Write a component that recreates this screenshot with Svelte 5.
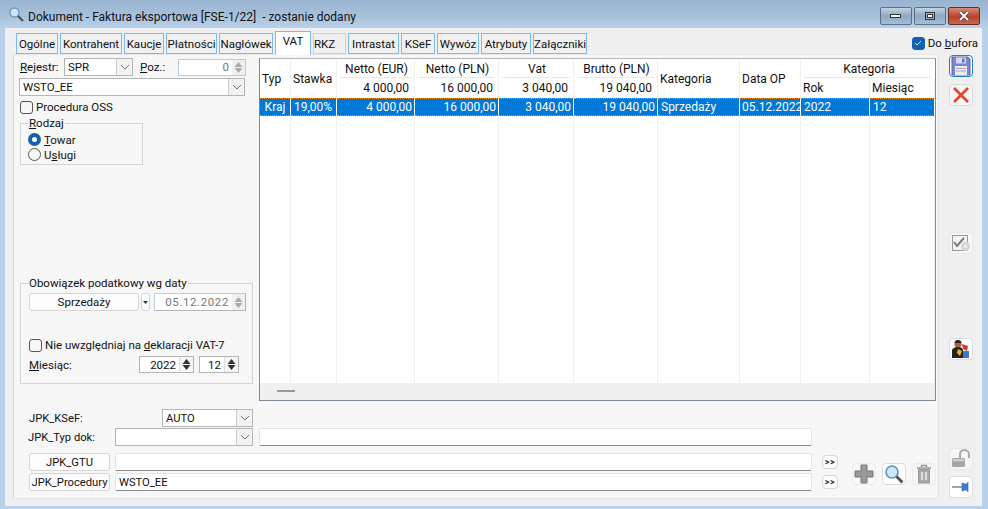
<script>
  const tabs = ["Ogólne", "Kontrahent", "Kaucje", "Płatności", "Nagłówek", "VAT", "RKZ", "Intrastat", "KSeF", "Wywóz", "Atrybuty", "Załączniki"];
  const tabWidths = [42, 62, 40, 51, 54, 36, 33, 51, 34, 42, 50, 54];
  const row = ["Kraj", "19,00%", "4 000,00", "16 000,00", "3 040,00", "19 040,00", "Sprzedaży", "05.12.2022", "2022", "12"];
  const rowRight = [false, false, true, true, true, true, false, false, false, false];
</script>

{#snippet arrow()}
  <span class="arrow">
    <svg width="10" height="6" viewBox="0 0 10 6"><path d="M1 1l4 4 4-4" fill="none" stroke="#777" /></svg>
  </span>
{/snippet}

{#snippet spin(dark)}
  <span class="spin" class:dark>
    <svg width="9" height="5" viewBox="0 0 9 5"><path d="M4.5 0l4 5h-8z" fill={dark ? "#333" : "#aaa"} /></svg>
    <svg width="9" height="5" viewBox="0 0 9 5"><path d="M4.5 5l4-5h-8z" fill={dark ? "#333" : "#aaa"} /></svg>
  </span>
{/snippet}

<div class="window">
  <header class="titlebar">
    <svg class="appicon" width="17" height="17" viewBox="0 0 17 17">
      <circle cx="6.5" cy="6.5" r="4.5" fill="#cfe6f7" stroke="#6a9cc4" stroke-width="1.4" />
      <path d="M10 10l5 5" stroke="#555" stroke-width="2.4" />
    </svg>
    <span class="title">Dokument - Faktura eksportowa [FSE-1/22]&nbsp; - zostanie dodany</span>
    <div class="wincontrols">
      <span class="wbtn">
        <svg width="12" height="6" viewBox="0 0 12 6"><rect x=".5" y="1.5" width="10" height="3" fill="#fff" stroke="#333" /></svg>
      </span>
      <span class="wbtn">
        <svg width="12" height="10" viewBox="0 0 12 10"><rect x="1.5" y="1.5" width="9" height="7" fill="none" stroke="#333" stroke-width="1" /><rect x="3.5" y="3.5" width="5" height="3" fill="#fff" stroke="#333" /></svg>
      </span>
      <span class="wbtn close">
        <svg width="14" height="10" viewBox="0 0 14 10"><path d="M3 1l8 8M11 1l-8 8" stroke="#333" stroke-width="3.4" /><path d="M3 1l8 8M11 1l-8 8" stroke="#fff" stroke-width="2" /></svg>
      </span>
    </div>
  </header>

  <div class="client">
    <nav class="tabbar">
      {#each tabs as tab, i}
        <span class="tab" class:active={tab === "VAT"} class:plain={tab === "RKZ"} style="width: {tabWidths[i]}px">{tab}</span>
      {/each}
      <label class="buffer">
        <span class="checkbox checked">
          <svg width="10" height="10" viewBox="0 0 10 10"><path d="M2 5l2 2 4-4" fill="none" stroke="#cfe2f7" /></svg>
        </span>
        <span>Do <u>b</u>ufora</span>
      </label>
    </nav>

    <div class="workspace">
      <main class="panel">
        <div class="upper">
          <section class="left">
            <div class="line first">
              <span class="lbl rejestr"><u>R</u>ejestr:</span>
              <span class="field select spr">SPR{@render arrow()}</span>
              <span class="lbl poz"><u>P</u>oz.:</span>
              <span class="field number poz-field">0{@render spin(false)}</span>
            </div>
            <span class="field select wsto">WSTO_EE{@render arrow()}</span>
            <label class="check oss"><span class="checkbox"></span>Procedura OSS</label>

            <fieldset class="group rodzaj">
              <legend><u>R</u>odzaj</legend>
              <label class="radio-line"><span class="radio on"></span><span><u>T</u>owar</span></label>
              <label class="radio-line"><span class="radio"></span><span>U<u>s</u>ługi</span></label>
            </fieldset>

            <fieldset class="group tax">
              <legend>Obowiązek podatkowy wg daty</legend>
              <div class="line">
                <span class="btn sale">Sprzedaży</span>
                <span class="btn mini">
                  <svg width="5" height="3" viewBox="0 0 5 3"><path d="M0 0h5L2.5 3z" fill="#333" /></svg>
                </span>
                <span class="field number date">05.12.2022{@render spin(false)}</span>
              </div>
              <label class="check vat7"><span class="checkbox"></span><span>Nie uwzględniaj na <u>d</u>eklaracji VAT-7</span></label>
              <div class="line month">
                <span class="lbl month-lbl"><u>M</u>iesiąc:</span>
                <span class="field number year">2022{@render spin(true)}</span>
                <span class="field number mon">12{@render spin(true)}</span>
              </div>
            </fieldset>
          </section>

          <section class="grid">
            <div class="hcell typ">Typ</div>
            <div class="hcell stawka">Stawka</div>
            <div class="hcell top" style="grid-column: 3">Netto (EUR)</div>
            <div class="hcell top" style="grid-column: 4">Netto (PLN)</div>
            <div class="hcell top" style="grid-column: 5">Vat</div>
            <div class="hcell top" style="grid-column: 6">Brutto (PLN)</div>
            <div class="hcell kat">Kategoria</div>
            <div class="hcell data">Data OP</div>
            <div class="hcell top wide">Kategoria</div>
            <div class="hcell sum" style="grid-column: 3">4 000,00</div>
            <div class="hcell sum" style="grid-column: 4">16 000,00</div>
            <div class="hcell sum" style="grid-column: 5">3 040,00</div>
            <div class="hcell sum" style="grid-column: 6">19 040,00</div>
            <div class="hcell sub" style="grid-column: 9">Rok</div>
            <div class="hcell sub" style="grid-column: 10">Miesiąc</div>

            {#each row as value, i}
              <div class="cell" class:right={rowRight[i]} class:center={i === 0} class:dated={i === 7}>{value}</div>
            {/each}
            {#each row as _}
              <div class="blank"></div>
            {/each}

            <div class="gridfoot"><span class="dash"></span></div>
          </section>
        </div>

        <div class="jpk">
          <div class="jpk-row ksef">
            <span class="jpk-lbl">JPK_KSeF:</span>
            <span class="field select auto">AUTO{@render arrow()}</span>
          </div>
          <div class="jpk-row typdok">
            <span class="jpk-lbl narrow">JPK_Typ dok:</span>
            <span class="field select typ-sel">{@render arrow()}</span>
            <span class="field flat long"></span>
          </div>
          <div class="jpk-row gtu">
            <span class="btn jpk-btn">JPK_GTU</span>
            <span class="field flat wide-input"></span>
            <span class="btn more">&gt;&gt;</span>
          </div>
          <div class="jpk-row proc">
            <span class="btn jpk-btn">JPK_Procedury</span>
            <span class="field flat wide-input">WSTO_EE</span>
            <span class="btn more">&gt;&gt;</span>
            <div class="tools">
              <span class="tool">
                <svg width="20" height="20" viewBox="0 0 20 20"><path d="M7 1h6v6h6v6h-6v6H7v-6H1V7h6z" fill="#9a9a9a" stroke="#777" /></svg>
              </span>
              <span class="tool strong">
                <svg width="20" height="20" viewBox="0 0 20 20">
                  <circle cx="8" cy="8" r="6" fill="#cfe6f7" stroke="#5a93c4" stroke-width="1.6" />
                  <path d="M12.5 12.5l6 6" stroke="#555" stroke-width="3" />
                </svg>
              </span>
              <span class="tool">
                <svg width="16" height="20" viewBox="0 0 16 20"><path d="M1 4h14M5.500 3V1.500h5V3" fill="none" stroke="#999" stroke-width="1.500" /><path d="M2.500 5.500h11V19h-11z" fill="#aaa" stroke="#999" /><path d="M6 8v8M10 8v8" stroke="#ddd" stroke-width="2" /></svg>
              </span>
            </div>
          </div>
        </div>
      </main>

      <aside class="sidebar">
        <span class="side focus">
          <svg width="20" height="20" viewBox="0 0 20 20">
            <path d="M1 1h16l2 2v16H1z" fill="#7d87c9" stroke="#5b66a8" />
            <rect x="5" y="1.500" width="10" height="6" fill="#d5d8ec" />
            <rect x="11" y="2.500" width="2.500" height="4" fill="#6570b5" />
            <rect x="4" y="10" width="12" height="9" fill="#e8e9f3" />
            <path d="M5 12.500h10M5 15h10" stroke="#aab" />
          </svg>
        </span>
        <span class="side">
          <svg width="18" height="18" viewBox="0 0 18 18"><path d="M2 2l14 14M16 2L2 16" stroke="#e8412a" stroke-width="2.600" /></svg>
        </span>
        <span class="side plain gear">
          <svg width="20" height="18" viewBox="0 0 20 18">
            <rect x="1.500" y="1.500" width="15" height="15" fill="#f4f4f4" stroke="#999" />
            <path d="M3 8l3 4 7-8" fill="none" stroke="#7a7a7a" stroke-width="2" />
            <circle cx="14.500" cy="12.500" r="4.500" fill="#d4d4d4" />
            <circle cx="14.500" cy="12.500" r="1.500" fill="#f4f4f4" />
          </svg>
        </span>
        <span class="side person">
          <svg width="20" height="20" viewBox="0 0 20 20">
            <circle cx="7" cy="5" r="3.500" fill="#a8663a" />
            <path d="M3.500 4c0-4 7-4 7 0z" fill="#2a2220" />
            <path d="M1 19v-7c0-3 3-4 6-4s5 1 5 4v7z" fill="#222" />
            <path d="M7 10l4 2-2 5-3-3z" fill="#eeb120" />
            <path d="M11 5l6 2-1 5-4-2z" fill="#d93a2b" />
            <path d="M12 12h6v7h-6z" fill="#3a78d0" />
          </svg>
        </span>
        <span class="side lock">
          <svg width="21" height="20" viewBox="0 0 21 20">
            <path d="M9 9V5.500a4.500 4.500 0 0 1 9 0V9" fill="none" stroke="#aaa" stroke-width="2" />
            <rect x="1" y="9" width="13" height="9" rx="1.500" fill="#a5a5a5" />
            <rect x="2" y="10" width="11" height="2.500" fill="#ccc" />
          </svg>
        </span>
        <span class="side pin">
          <svg width="20" height="16" viewBox="0 0 20 16">
            <path d="M1 8h10" stroke="#8a8a8a" stroke-width="1.500" />
            <path d="M11 4l3 1h2l1-2v10l-1-2h-2l-3 1z" fill="#3d7fd0" stroke="#2a60a8" stroke-width=".6" />
          </svg>
        </span>
      </aside>
    </div>
  </div>
</div>

<style>
  :global(body) {
    margin: 0;
    background: #b9d1ea;
  }

  .window {
    width: 988px;
    height: 509px;
    display: flex;
    flex-direction: column;
    overflow: hidden;
    font-family: Roboto, "Noto Sans", sans-serif;
    font-size: 12px;
    color: #111;
    background: #b9d1ea;
  }

  u {
    text-underline-offset: 1px;
  }

  .titlebar {
    height: 28px;
    display: flex;
    align-items: center;
    padding-left: 8px;
    padding-right: 8px;
    flex-shrink: 0;
    background: linear-gradient(#99b4d1, #a9c2dc 60%, #b9d1ea);
  }

  .appicon {
    margin-right: 2px;
  }

  .title {
    font-size: 12px;
    flex: 1;
    padding-top: 5px;
    padding-left: 1px;
  }

  .wincontrols {
    display: flex;
    gap: 2px;
    align-self: flex-start;
    margin-top: 7px;
  }

  .wbtn {
    width: 32px;
    height: 18px;
    box-sizing: border-box;
    border: 1px solid #5c7087;
    border-radius: 2px;
    background: linear-gradient(#c3d3e3, #8fa8c2 50%, #a6bed6);
    display: flex;
    align-items: center;
    justify-content: center;
  }

  .wbtn.close {
    background: linear-gradient(#d68a78, #b9402c 55%, #c76a55);
    border-color: #6b2d22;
  }

  .client {
    flex: 1;
    margin: 0 6px 3px 5px;
    background: #f0f0f0;
    display: flex;
    flex-direction: column;
    min-height: 0;
  }

  .tabbar {
    height: 26px;
    display: flex;
    align-items: flex-start;
    padding: 4px 0 0 11px;
    gap: 2px;
    box-sizing: border-box;
    flex-shrink: 0;
    font-size: 11.5px;
  }

  .tab {
    height: 21px;
    margin-top: 1px;
    box-sizing: border-box;
    border: 1px solid #78bdf2;
    background: #f0f0f0;
    display: flex;
    align-items: center;
    justify-content: center;
    white-space: nowrap;
  }

  .tab.active {
    background: #fff;
    height: 24px;
    margin-top: -1px;
    padding-bottom: 6px;
    border-bottom: 0;
    position: relative;
    z-index: 1;
  }

  .tab.plain {
    border-color: #d0d0d0;
    justify-content: flex-start;
    padding-left: 0;
  }

  .buffer {
    margin-left: auto;
    display: flex;
    align-items: center;
    gap: 3px;
    margin-right: 4px;
    margin-top: 4px;
  }

  .workspace {
    flex: 1;
    display: flex;
    min-height: 0;
  }

  .panel {
    margin-left: 8px;
    margin-bottom: 7px;
    width: 926px;
    box-sizing: border-box;
    background: #f7f7f7;
    border: 1px solid #e6e6e6;
    border-left-color: #dcdcdc;
    display: flex;
    flex-direction: column;
  }

  .upper {
    display: flex;
    height: 343px;
    padding-top: 3px;
  }

  .left {
    width: 245px;
    flex-shrink: 0;
    padding-left: 5px;
    box-sizing: border-box;
    display: flex;
    flex-direction: column;
    font-size: 11.5px;
  }

  .line {
    display: flex;
    align-items: center;
  }

  .lbl {
    white-space: nowrap;
  }

  .rejestr {
    width: 45px;
    padding-left: 1px;
    box-sizing: border-box;
  }

  .poz {
    width: 38px;
    margin-left: 7px;
  }

  .field {
    height: 18px;
    box-sizing: border-box;
    background: #fff;
    border: 1px solid #b5b5b5;
    display: flex;
    align-items: center;
    padding-left: 3px;
    white-space: nowrap;
    position: relative;
  }

  .select {
    justify-content: space-between;
    padding-right: 0;
  }

  .arrow {
    width: 16px;
    height: 100%;
    background: #f2f2f2;
    border-left: 1px solid #ccc;
    display: flex;
    align-items: center;
    justify-content: center;
    box-sizing: border-box;
    flex-shrink: 0;
  }

  .number {
    justify-content: flex-end;
    padding-left: 0;
    padding-right: 0;
  }

  .spin {
    width: 13px;
    align-self: stretch;
    display: flex;
    flex-direction: column;
    align-items: center;
    justify-content: center;
    gap: 1px;
    margin-left: 3px;
    background: #f0f0f0;
    flex-shrink: 0;
  }

  .spin.dark {
    background: #f6f6f6;
    border-left: 1px solid #ddd;
  }

  .spr {
    width: 69px;
  }

  .poz-field {
    width: 68px;
    height: 17px;
    color: #777;
    border-color: #b5cde8;
  }

  .wsto {
    width: 226px;
    margin-top: 2px;
  }

  .checkbox {
    width: 13px;
    height: 13px;
    box-sizing: border-box;
    border: 1px solid #555;
    border-radius: 3px;
    background: #f7f7f7;
    display: inline-flex;
    align-items: center;
    justify-content: center;
    flex-shrink: 0;
  }

  .checkbox.checked {
    background: #0f62b0;
    border-color: #0f62b0;
  }

  .check {
    display: flex;
    align-items: center;
    gap: 3px;
    white-space: nowrap;
  }

  .oss {
    margin-top: 4px;
    margin-left: 1px;
  }

  .group {
    margin: 0;
    padding: 0;
    border: 1px solid #d4d4d4;
    box-sizing: border-box;
    min-width: 0;
    display: block;
  }

  .group legend {
    margin-left: 0;
    padding: 0 1px 0 0;
    line-height: 12px;
    height: 12px;
  }

  .rodzaj {
    width: 123px;
    height: 48px;
    margin-left: 1px;
    margin-top: 3px;
    padding-left: 7px;
    padding-top: 3px;
  }

  .rodzaj legend {
    padding-left: 1px;
  }

  .radio-line {
    display: flex;
    align-items: center;
    gap: 3px;
    height: 15px;
  }

  .radio {
    width: 13px;
    height: 13px;
    box-sizing: border-box;
    border: 1px solid #555;
    border-radius: 50%;
    background: #f7f7f7;
    flex-shrink: 0;
  }

  .radio.on {
    border: 4px solid #0f62b0;
    background: #fff;
  }

  .tax {
    width: 233px;
    height: 107px;
    margin-left: 1px;
    margin-top: auto;
    margin-bottom: 17px;
    padding-left: 8px;
    padding-top: 2px;
  }

  .btn {
    box-sizing: border-box;
    border: 1px solid #d5d5d5;
    border-radius: 3px;
    background: #fdfdfd;
    display: flex;
    align-items: center;
    justify-content: center;
    white-space: nowrap;
  }

  .sale {
    width: 110px;
    height: 18px;
    margin-top: 2px;
  }

  .mini {
    width: 9px;
    height: 18px;
    margin: 2px 0 0 2px;
  }

  .date {
    width: 92px;
    height: 18px;
    margin: 2px 0 0 4px;
    color: #777;
    letter-spacing: .6px;
    border-color: #b5cde8 #b5b5b5 #b5b5b5 #b5cde8;
  }

  .vat7 {
    margin-top: 27px;
  }

  .month {
    margin-top: 4px;
  }

  .month-lbl {
    width: 110px;
  }

  .year {
    width: 55px;
    height: 17px;
  }

  .mon {
    width: 40px;
    height: 17px;
    margin-left: 5px;
  }

  .grid {
    width: 677px;
    height: 343px;
    box-sizing: border-box;
    background: #fff;
    border: 1px solid #7f8a96;
    border-top-color: #b5b5b5;
    display: grid;
    grid-template-columns: 31px 46px 78px 84px 75px 84px 82px 61px 69px 65px;
    grid-template-rows: 19px 20px 18px 1fr 17px;
    overflow: hidden;
  }

  .hcell {
    display: flex;
    align-items: center;
    border-right: 1px solid #f0f0f0;
    box-sizing: border-box;
    white-space: nowrap;
    padding-left: 2px;
  }

  .typ {
    grid-column: 1;
    grid-row: 1 / span 2;
  }

  .stawka {
    grid-column: 2;
    grid-row: 1 / span 2;
  }

  .kat {
    grid-column: 7;
    grid-row: 1 / span 2;
  }

  .data {
    grid-column: 8;
    grid-row: 1 / span 2;
  }

  .top {
    grid-row: 1;
    justify-content: center;
    background: linear-gradient(#dfeaf5, #dfeaf5) no-repeat center bottom / calc(100% - 6px) 1px;
  }

  .wide {
    grid-column: 9 / span 2;
    border-right: 0;
  }

  .sum {
    grid-row: 2;
    justify-content: flex-end;
    padding-right: 5px;
  }

  .sub {
    grid-row: 2;
  }

  .cell {
    background: #0078d7;
    color: #fff;
    display: flex;
    align-items: center;
    padding: 0 3px;
    box-sizing: border-box;
    border-right: 1px solid #fff;
    border-top: 1px dotted #f08a24;
    border-bottom: 1px dotted #f08a24;
    white-space: nowrap;
    overflow: hidden;
  }

  .cell.right {
    justify-content: flex-end;
    padding-right: 2px;
  }

  .cell.center {
    justify-content: center;
  }

  .cell.dated {
    padding: 0 0 0 2px;
  }

  .blank {
    border-right: 1px solid #f0f0f0;
  }

  .gridfoot {
    grid-column: 1 / -1;
    background: #f0f0f0;
    padding: 7px 0 0 17px;
  }

  .dash {
    display: block;
    width: 18px;
    height: 2px;
    background: #999;
  }

  .jpk {
    flex: 1;
    padding-left: 15px;
    font-size: 11.2px;
  }

  .jpk-row {
    display: flex;
    align-items: center;
  }

  .jpk-lbl {
    width: 133px;
    white-space: nowrap;
  }

  .jpk-lbl.narrow {
    width: 87px;
    margin-left: -1px;
  }

  .ksef {
    padding-top: 8px;
  }

  .auto {
    width: 91px;
    color: #111;
  }

  .typ-sel {
    width: 138px;
    justify-content: flex-end;
  }

  .typdok {
    margin-top: 1px;
  }

  .flat {
    background: #fff;
    border: 1px solid #e4e4e4;
    border-bottom-color: #8a8a8a;
    border-radius: 2px;
  }

  .long {
    width: 553px;
    margin-left: 6px;
  }

  .gtu {
    margin-top: 7px;
  }

  .proc {
    margin-top: 2px;
    position: relative;
  }

  .jpk-btn {
    width: 81px;
    height: 18px;
    margin-right: 5px;
  }

  .wide-input {
    width: 697px;
  }

  .more {
    width: 16px;
    height: 14px;
    margin-left: 10px;
    font-size: 9px;
    font-weight: 700;
    letter-spacing: .5px;
    color: #222;
    border-radius: 4px;
  }

  .tools {
    position: absolute;
    left: 823px;
    bottom: 6px;
    display: flex;
    gap: 6px;
  }

  .tool {
    width: 24px;
    height: 22px;
    box-sizing: border-box;
    border: 1px solid #ececec;
    border-radius: 4px;
    display: flex;
    align-items: center;
    justify-content: center;
  }

  .tool.strong {
    border-color: #ddd;
    background: #fff;
  }

  .sidebar {
    flex: 1;
    display: flex;
    flex-direction: column;
    align-items: center;
    padding-top: 1px;
    padding-right: 1px;
    margin-left: 2px;
  }

  .side {
    width: 24px;
    height: 22px;
    box-sizing: border-box;
    border: 1px solid #dcdcdc;
    border-radius: 4px;
    background: #f6f6f6;
    display: flex;
    align-items: center;
    justify-content: center;
    margin-bottom: 7px;
    flex-shrink: 0;
  }

  .side.focus {
    border-color: #1b7fd6;
    background: #fff;
  }

  .gear {
    margin-top: 119px;
    border-color: #e8e8e8;
  }

  .person {
    margin-top: 77px;
    background: #fff;
  }

  .lock {
    margin-top: 81px;
    margin-bottom: 6px;
    border-color: #e8e8e8;
  }

  .pin {
    background: #fff;
  }
</style>
